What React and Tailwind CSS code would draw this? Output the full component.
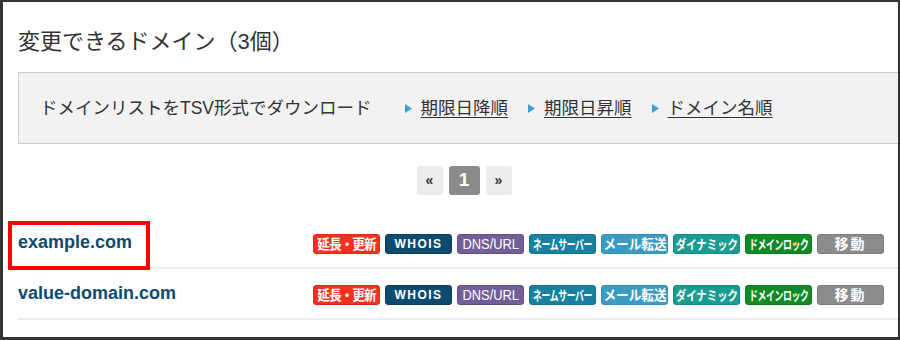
import React from 'react';

const jp = { fontFamily: '"Liberation Sans", "Noto Sans CJK JP", sans-serif' };

const badges = [
  { label: '延長・更新', cls: 'bg-[#f4321f] border-[#e0281a] text-[14px] font-bold', inner: 'scale-x-[0.9] tracking-[-1px]' },
  { label: 'WHOIS', cls: 'bg-[#0f4a6f] border-[#0b3e5e] text-[12px] font-bold tracking-[1.5px]', inner: '' },
  { label: 'DNS/URL', cls: 'bg-[#725e98] border-[#62508a] text-[14px]', inner: 'scale-x-[0.92]' },
  { label: 'ネームサーバー', cls: 'bg-[#19819f] border-[#13728f] text-[13px] font-bold', inner: 'scale-x-[0.68] tracking-[-0.5px]' },
  { label: 'メール転送', cls: 'bg-[#3a9cc3] border-[#3290b6] text-[14px] font-bold', inner: 'scale-x-[0.9]' },
  { label: 'ダイナミック', cls: 'bg-[#1a9c92] border-[#148c83] text-[13px] font-bold', inner: 'scale-x-[0.8]' },
  { label: 'ドメインロック', cls: 'bg-[#0f8a25] border-[#0b7a1e] text-[13px] font-bold', inner: 'scale-x-[0.68] tracking-[-0.5px]' },
  { label: '移動', cls: 'bg-[#8c8c8c] border-[#7c7c7c] text-[14px] font-bold tracking-[2px]', inner: '' },
];

const Tri = () => (
  <svg width="7" height="9" viewBox="0 0 7 9" className="mr-[9px]">
    <polygon points="0,0 7,4.5 0,9" fill="#3d9fd4" />
  </svg>
);

const DomainRow = ({ name, highlight }) => (
  <div className="relative flex items-center h-[51px] border-b-2 border-[#ececec]">
    {highlight && (
      <div className="absolute left-[-10px] top-[3px] w-[142px] h-[49px] border-[4px] border-[#ff0000]" />
    )}
    <a className="text-[18px] font-bold text-[#0c4a72]" style={{ fontFamily: '"Liberation Sans", Arial, sans-serif' }}>
      {name}
    </a>
    <div className="ml-auto flex gap-[5px] mt-[3px] pr-[14px]">
      {badges.map((b) => (
        <span
          key={b.label}
          className={`w-[67px] h-[20px] flex items-center justify-center rounded-[3px] border text-white leading-none whitespace-nowrap overflow-hidden ${b.cls}`}
        >
          <span className={`inline-block ${b.inner}`}>{b.label}</span>
        </span>
      ))}
    </div>
  </div>
);

export default function App() {
  return (
    <div className="w-[900px] h-[340px] bg-[#333333] pt-[2px] pl-[3px] pr-[2px] pb-[3px]" style={jp}>
      <div className="h-full bg-white overflow-hidden pl-[15px]">
        <h1 className="mt-[24px] text-[22px] leading-[32px] text-[#333] font-normal">
          変更できるドメイン（3個）
        </h1>
        <div className="mt-[14px] h-[72px] -mr-[20px] bg-[#f2f2f2] border border-[#cccccc] flex items-center pl-[21px] text-[17.5px] text-[#333]">
          <span>ドメインリストをTSV形式でダウンロード</span>
          <div className="flex items-center ml-[33px]">
            <Tri />
            <a className="underline underline-offset-[3px] mr-[20px]">期限日降順</a>
            <Tri />
            <a className="underline underline-offset-[3px] mr-[20px]">期限日昇順</a>
            <Tri />
            <a className="underline underline-offset-[3px]">ドメイン名順</a>
          </div>
        </div>
        <div className="mt-[22px] flex justify-center pl-[12px] gap-[6px]">
          <span className="w-[26px] h-[29px] flex items-center justify-center rounded-[3px] bg-[#ececec] text-[14px] font-bold text-[#333]">«</span>
          <span className="w-[31px] h-[29px] flex items-center justify-center rounded-[3px] bg-[#8a8a8a] text-[19px] font-bold text-white">1</span>
          <span className="w-[26px] h-[29px] flex items-center justify-center rounded-[3px] bg-[#ececec] text-[14px] font-bold text-[#333]">»</span>
        </div>
        <div className="mt-[23px]">
          <DomainRow name="example.com" highlight />
          <DomainRow name="value-domain.com" />
        </div>
      </div>
    </div>
  );
}
